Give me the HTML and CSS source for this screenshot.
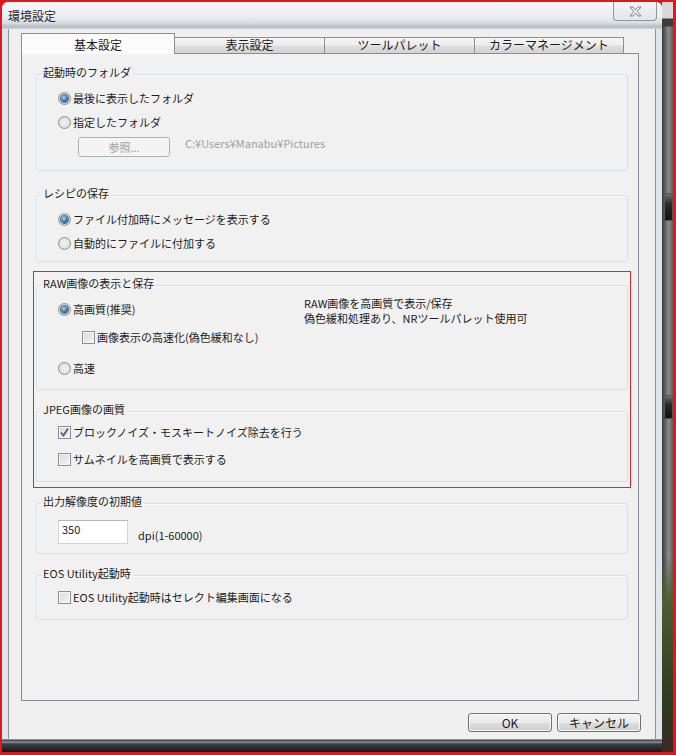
FILE: index.html
```html
<!DOCTYPE html>
<html lang="ja">
<head>
    <meta charset="UTF-8">
    <title>環境設定</title>
    <link rel="stylesheet" href="styles.css">
</head>
<body>
    <div class="shot">
        <div class="window">
            <div class="titlebar">
                <span class="title">環境設定</span>
                <span class="close">
                    <svg width="13" height="11" viewBox="0 0 13 11"><polygon points="1,1 4,1 6.5,4 9,1 12,1 8.2,5.5 12,10 9,10 6.5,7 4,10 1,10 4.8,5.5" fill="#f7f8f9" stroke="#7a828a" stroke-width="1" stroke-linejoin="round"/></svg>
                </span>
            </div>
            <div class="client">
                <div class="tabs">
                    <div class="tab active">基本設定</div>
                    <div class="tab">表示設定</div>
                    <div class="tab">ツールパレット</div>
                    <div class="tab last">カラーマネージメント</div>
                </div>
                <div class="pane">
                    <fieldset class="group g-folder">
                        <legend>起動時のフォルダ</legend>
                        <div class="body">
                            <div class="row"><span class="radio checked"></span>最後に表示したフォルダ</div>
                            <div class="row"><span class="radio"></span>指定したフォルダ</div>
                            <div class="browse-row">
                                <span class="btn disabled">参照...</span>
                                <span class="path">C:¥Users¥Manabu¥Pictures</span>
                            </div>
                        </div>
                    </fieldset>

                    <fieldset class="group g-recipe">
                        <legend>レシピの保存</legend>
                        <div class="body">
                            <div class="row"><span class="radio checked"></span>ファイル付加時にメッセージを表示する</div>
                            <div class="row"><span class="radio"></span>自動的にファイルに付加する</div>
                        </div>
                    </fieldset>

                    <div class="mark">
                        <fieldset class="group g-raw">
                            <legend>RAW画像の表示と保存</legend>
                            <div class="body">
                                <div class="raw-top">
                                    <div class="row raw-choice"><span class="radio checked"></span>高画質(推奨)</div>
                                    <div class="desc">RAW画像を高画質で表示/保存<br>偽色緩和処理あり、NRツールパレット使用可</div>
                                </div>
                                <div class="row indent"><span class="check"></span>画像表示の高速化(偽色緩和なし)</div>
                                <div class="row fast"><span class="radio"></span>高速</div>
                            </div>
                        </fieldset>

                        <fieldset class="group g-jpeg">
                            <legend>JPEG画像の画質</legend>
                            <div class="body">
                                <div class="row"><span class="check checked"><svg width="11" height="11" viewBox="0 0 11 11"><path d="M2 5.5 L4.5 8.5 L9 1.5" fill="none" stroke="#4a5d8c" stroke-width="1.8"/></svg></span>ブロックノイズ・モスキートノイズ除去を行う</div>
                                <div class="row second"><span class="check"></span>サムネイルを高画質で表示する</div>
                            </div>
                        </fieldset>
                    </div>

                    <fieldset class="group g-res">
                        <legend>出力解像度の初期値</legend>
                        <div class="body">
                            <div class="res-row">
                                <span class="num">350</span>
                                <span class="dpi">dpi(1-60000)</span>
                            </div>
                        </div>
                    </fieldset>

                    <fieldset class="group g-eos">
                        <legend>EOS Utility起動時</legend>
                        <div class="body">
                            <div class="row"><span class="check"></span>EOS Utility起動時はセレクト編集画面になる</div>
                        </div>
                    </fieldset>
                </div>
                <div class="actions">
                    <span class="btn">OK</span>
                    <span class="btn">キャンセル</span>
                </div>
            </div>
        </div>
        <div class="desk">
            <span class="badge"></span>
            <span class="badge lower"></span>
        </div>
    </div>
</body>
</html>
```

FILE: styles.css
```css
body {
    margin: 0;
    background: #e3161d;
    font-family: "Noto Sans CJK JP", "Noto Sans", sans-serif;
    font-size: 11px;
    color: #1c1c1c;
}
.shot {
    width: 676px;
    height: 755px;
    box-sizing: border-box;
    border: solid #e3161d;
    border-width: 2px 3px 3px 2px;
    display: flex;
    overflow: hidden;
}

/* window frame */
.window {
    width: 660px;
    display: flex;
    flex-direction: column;
    border-radius: 6px 6px 0 0;
    background: linear-gradient(to bottom,
        #dfe5ea 0, #dfe5ea calc(100% - 13px),
        #2e3338 calc(100% - 12px), #8d949a calc(100% - 10px),
        #3a3f44 calc(100% - 8px), #15181b 100%);
}
.titlebar {
    height: 27px;
    display: flex;
    align-items: flex-start;
    padding: 0 5px 0 6px;
    border-radius: 6px 6px 0 0;
    background: linear-gradient(to bottom, #f4f6f8 0, #eceff2 14px, #d7dde2 21px, #b4bbc1 25px, #cfd6dc 27px);
}
.title {
    flex: 1;
    font-size: 12px;
    line-height: 28px;
    color: #2a2a2a;
}
.close {
    width: 44px;
    height: 19px;
    box-sizing: border-box;
    border: 1px solid #8e969e;
    border-top: none;
    border-radius: 0 0 4px 4px;
    background: linear-gradient(#f3f5f7, #e2e7eb);
    display: flex;
    align-items: center;
    justify-content: center;
}

.client {
    margin: 0 6px;
    height: 711px;
    box-sizing: border-box;
    padding: 4px 16px 7px 12px;
    background: #f0f0f0;
    border: 1px solid #8b9299;
    border-top: none;
}

/* tabs */
.tabs {
    display: flex;
    align-items: flex-end;
    height: 20px;
}
.tab {
    width: 150px;
    height: 16px;
    box-sizing: border-box;
    border: 1px solid #8c8e94;
    border-left: none;
    border-bottom: none;
    background: linear-gradient(#f6f6f6, #ededed 45%, #dfdfdf 55%, #d3d3d3);
    font-size: 12px;
    line-height: 14px;
    text-align: center;
    color: #1a1a1a;
}
.tab.active {
    width: 154px;
    height: 21px;
    margin: 0 0 -1px 0;
    padding-top: 3px;
    line-height: 16px;
    border-left: 1px solid #8c8e94;
    background: #fbfbfb;
    position: relative;
    z-index: 1;
}
.tab.last {
    width: 149px;
}
.pane {
    width: 618px;
    height: 648px;
    box-sizing: border-box;
    border: 1px solid #898c95;
    background: #f1f1f1;
}

/* group boxes */
.group {
    margin: 0 10px 0 14px;
    padding: 0;
    min-width: 0;
    box-sizing: border-box;
    border: 1px solid #d5dfe5;
    border-radius: 3px;
    box-shadow: inset 1px 1px 0 #fafafa;
}
.group legend {
    margin-left: 4px;
    padding: 0 2px 4px;
    line-height: 10px;
}
.body {
    padding-left: 21px;
}
.row {
    display: flex;
    align-items: center;
    height: 24px;
}
.g-folder { margin-top: 13px; height: 104px; }
.g-folder .body { padding-top: 5px; }
.g-recipe { margin-top: 17px; height: 74px; }
.g-recipe .body { padding-top: 5px; }

.mark {
    margin: 9px 7px 0 11px;
    padding-bottom: 5px;
    border: 1px solid #e3242b;
}
.mark .group {
    margin: 0 2px;
}
.mark .g-raw { margin-top: 6px; height: 112px; }
.g-raw .body { padding-top: 5px; }
.raw-top {
    display: flex;
    align-items: flex-start;
    height: 24px;
}
.raw-choice {
    width: 246px;
}
.desc {
    margin-top: -1px;
    line-height: 15px;
}
.row.indent {
    margin: 4px 0 0 24px;
}
.row.fast {
    margin-top: 7px;
}
.mark .g-jpeg { margin-top: 14px; height: 78px; }
.g-jpeg .body { padding-top: 2px; }
.row.second { margin-top: 3px; }

.g-res { margin-top: 8px; height: 58px; }
.res-row {
    display: flex;
    align-items: flex-start;
    margin-top: 10px;
}
.num {
    width: 70px;
    height: 24px;
    box-sizing: border-box;
    padding: 1px 3px;
    line-height: 14px;
    background: #fff;
    border: 1px solid #d2d5d9;
    border-top-color: #b4b7bc;
}
.dpi {
    margin: 8px 0 0 10px;
    line-height: 14px;
}
.g-eos { margin-top: 14px; height: 52px; }
.g-eos .body { padding-top: 3px; }

/* controls */
.radio {
    width: 13px;
    height: 13px;
    box-sizing: border-box;
    margin-right: 2px;
    border-radius: 50%;
    border: 1px solid #8d8f92;
    background: radial-gradient(circle at 50% 50%, #f2f2f2 0, #e4e4e4 55%, #c6c8ca 100%);
    display: flex;
    align-items: center;
    justify-content: center;
    flex-shrink: 0;
}
.radio.checked::after {
    content: "";
    width: 7px;
    height: 7px;
    border-radius: 50%;
    background: radial-gradient(circle at 40% 35%, #b4d8f4 0, #3d7db3 50%, #173f66 100%);
    box-shadow: 0 0 0 1px #4a6c8c;
}
.check {
    width: 13px;
    height: 13px;
    box-sizing: border-box;
    margin-right: 2px;
    border: 1px solid #8e8f8f;
    background: linear-gradient(135deg, #d4d6d9, #f7f7f7);
    box-shadow: inset 0 0 0 1px #f6f6f6;
    display: flex;
    align-items: center;
    justify-content: center;
    flex-shrink: 0;
}
.check svg {
    display: block;
}
.btn {
    width: 84px;
    height: 19px;
    box-sizing: border-box;
    border: 1px solid #707070;
    border-radius: 3px;
    background: linear-gradient(#f2f2f2 0, #ebebeb 50%, #dddddd 50%, #cfcfcf 100%);
    box-shadow: inset 0 0 0 1px #fbfbfb;
    display: flex;
    align-items: center;
    justify-content: center;
    font-size: 12px;
    color: #1a1a1a;
}
.browse-row {
    display: flex;
    align-items: flex-start;
    margin-top: 3px;
}
.btn.disabled {
    width: 92px;
    height: 20px;
    margin-left: 20px;
    border-color: #adb2b5;
    background: #f4f4f4;
    box-shadow: none;
    color: #a0a0a0;
    font-size: 11px;
}
.path {
    margin: -1px 0 0 15px;
    line-height: 14px;
    color: #a0a0a0;
}
.actions {
    display: flex;
    justify-content: flex-end;
    gap: 5px;
    margin: 12px -2px 0 0;
}

/* desktop behind the window */
.desk {
    flex: 1;
    display: flex;
    flex-direction: column;
    align-items: flex-end;
    background:
        linear-gradient(to bottom, transparent 555px, #4b5d33 600px, #2e3a22 700px, #3b2a22 750px),
        linear-gradient(to bottom, #d9d9d9 0, #d9d9d9 16px, #3c3c3c 17px, #3c3c3c 24px, transparent 25px),
        linear-gradient(to right, #3a3a3a, #8c8c8c 60%, #5e5e5e);
}
.badge {
    width: 9px;
    height: 28px;
    margin-top: 191px;
    border-radius: 2px;
    background: linear-gradient(#777 0, #2a2a2a 40%, #111 100%);
    box-shadow: inset 0 0 0 1px #555;
}
.badge.lower {
    margin-top: 174px;
    height: 24px;
}
```
